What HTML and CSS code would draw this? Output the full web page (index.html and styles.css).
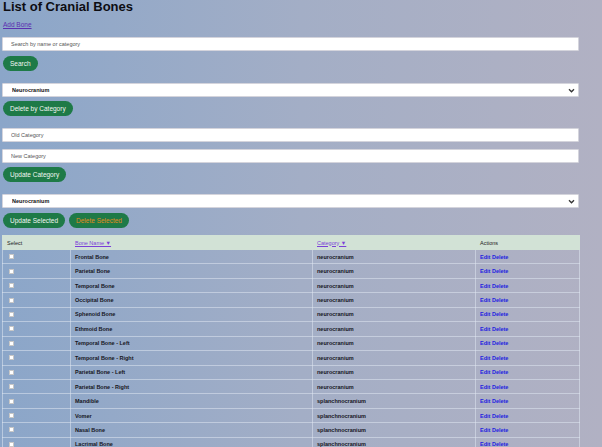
FILE: index.html
```html
<!DOCTYPE html>
<html lang="en">
<head>
<meta charset="utf-8">
<title>List of Cranial Bones</title>
<link rel="stylesheet" href="styles.css">
</head>
<body>
<main class="page">
  <h1 class="title">List of Cranial Bones</h1>
  <p class="add-row"><a href="#" class="add-link">Add Bone</a></p>

  <form class="block block-search">
    <input class="field" type="text" placeholder="Search by name or category">
    <button class="btn" type="button">Search</button>
  </form>

  <form class="block block-delete">
    <div class="select-wrap">
      <select class="field select"><option>Neurocranium</option></select>
      <svg class="chev" viewBox="0 0 8 6" width="7" height="5"><path d="M1 1.5 L4 4.5 L7 1.5" fill="none" stroke="#333" stroke-width="1.6"/></svg>
    </div>
    <button class="btn" type="button">Delete by Category</button>
  </form>

  <form class="block block-update">
    <input class="field" type="text" placeholder="Old Category">
    <input class="field field-second" type="text" placeholder="New Category">
    <button class="btn" type="button">Update Category</button>
  </form>

  <form class="block block-bulk">
    <div class="select-wrap">
      <select class="field select"><option>Neurocranium</option></select>
      <svg class="chev" viewBox="0 0 8 6" width="7" height="5"><path d="M1 1.5 L4 4.5 L7 1.5" fill="none" stroke="#333" stroke-width="1.6"/></svg>
    </div>
    <div class="btn-row">
      <button class="btn" type="button">Update Selected</button>
      <button class="btn btn-warn" type="button">Delete Selected</button>
    </div>
  </form>

  <table class="bones">
    <colgroup>
      <col class="c-sel"><col class="c-name"><col class="c-cat"><col class="c-act">
    </colgroup>
    <thead>
      <tr>
        <th>Select</th>
        <th><a href="#" class="sort">Bone Name ▼</a></th>
        <th><a href="#" class="sort">Category ▼</a></th>
        <th>Actions</th>
      </tr>
    </thead>
    <tbody>
      <tr><td><input type="checkbox" class="chk"></td><td class="name">Frontal Bone</td><td>neurocranium</td><td class="act"><a href="#">Edit</a> <a href="#">Delete</a></td></tr>
      <tr><td><input type="checkbox" class="chk"></td><td class="name">Parietal Bone</td><td>neurocranium</td><td class="act"><a href="#">Edit</a> <a href="#">Delete</a></td></tr>
      <tr><td><input type="checkbox" class="chk"></td><td class="name">Temporal Bone</td><td>neurocranium</td><td class="act"><a href="#">Edit</a> <a href="#">Delete</a></td></tr>
      <tr><td><input type="checkbox" class="chk"></td><td class="name">Occipital Bone</td><td>neurocranium</td><td class="act"><a href="#">Edit</a> <a href="#">Delete</a></td></tr>
      <tr><td><input type="checkbox" class="chk"></td><td class="name">Sphenoid Bone</td><td>neurocranium</td><td class="act"><a href="#">Edit</a> <a href="#">Delete</a></td></tr>
      <tr><td><input type="checkbox" class="chk"></td><td class="name">Ethmoid Bone</td><td>neurocranium</td><td class="act"><a href="#">Edit</a> <a href="#">Delete</a></td></tr>
      <tr><td><input type="checkbox" class="chk"></td><td class="name">Temporal Bone - Left</td><td>neurocranium</td><td class="act"><a href="#">Edit</a> <a href="#">Delete</a></td></tr>
      <tr><td><input type="checkbox" class="chk"></td><td class="name">Temporal Bone - Right</td><td>neurocranium</td><td class="act"><a href="#">Edit</a> <a href="#">Delete</a></td></tr>
      <tr><td><input type="checkbox" class="chk"></td><td class="name">Parietal Bone - Left</td><td>neurocranium</td><td class="act"><a href="#">Edit</a> <a href="#">Delete</a></td></tr>
      <tr><td><input type="checkbox" class="chk"></td><td class="name">Parietal Bone - Right</td><td>neurocranium</td><td class="act"><a href="#">Edit</a> <a href="#">Delete</a></td></tr>
      <tr><td><input type="checkbox" class="chk"></td><td class="name">Mandible</td><td>splanchnocranium</td><td class="act"><a href="#">Edit</a> <a href="#">Delete</a></td></tr>
      <tr><td><input type="checkbox" class="chk"></td><td class="name">Vomer</td><td>splanchnocranium</td><td class="act"><a href="#">Edit</a> <a href="#">Delete</a></td></tr>
      <tr><td><input type="checkbox" class="chk"></td><td class="name">Nasal Bone</td><td>splanchnocranium</td><td class="act"><a href="#">Edit</a> <a href="#">Delete</a></td></tr>
      <tr><td><input type="checkbox" class="chk"></td><td class="name">Lacrimal Bone</td><td>splanchnocranium</td><td class="act"><a href="#">Edit</a> <a href="#">Delete</a></td></tr>
    </tbody>
  </table>
</main>
</body>
</html>
```

FILE: styles.css
```css
* { box-sizing: border-box; }

html, body {
  margin: 0;
  padding: 0;
  height: 100%;
}

body {
  background: linear-gradient(90deg, #8ba6c9 0%, #a3aec6 50%, #b1b1c3 100%);
  font-family: "Liberation Sans", Arial, sans-serif;
  color: #111;
  overflow: hidden;
}

.page {
  width: 579px;
  padding-left: 2px;
  display: flex;
  flex-direction: column;
}

.title {
  margin: 0;
  font-size: 13px;
  line-height: 14px;
  font-weight: bold;
  color: #0d0d12;
  padding-left: 1px;
}

.add-row {
  margin: 7px 0 0 1px;
  font-size: 6.5px;
  line-height: 7px;
}

.add-link { color: #5b2fb0; }

.block {
  display: flex;
  flex-direction: column;
  align-items: flex-start;
  margin: 0;
}

.block-search { margin-top: 9px; }
.block-delete { margin-top: 12px; }
.block-update { margin-top: 12px; }
.block-bulk { margin-top: 12px; }

.field {
  width: 577px;
  height: 14px;
  border: 1px solid #d4d4dc;
  border-radius: 1px;
  background: #fff;
  font-family: "Liberation Sans", Arial, sans-serif;
  font-size: 5.5px;
  padding: 0 0 0 8px;
  color: #222;
  outline: none;
}

.field::placeholder { color: #555; }

.field-second { margin-top: 7px; }

.select-wrap {
  position: relative;
  width: 577px;
}

.select {
  appearance: none;
  -webkit-appearance: none;
  display: block;
  font-weight: bold;
  color: #111;
  padding-left: 9px;
}

.chev {
  position: absolute;
  right: 4px;
  top: 5px;
}

.btn {
  margin-top: 5px;
  height: 15px;
  padding: 0 7px;
  border: none;
  border-radius: 8px;
  background: #1e7a47;
  color: #f2f6f2;
  font-family: "Liberation Sans", Arial, sans-serif;
  font-size: 6.5px;
  line-height: 15px;
  margin-left: 1px;
}

.block-delete .btn,
.block-update .btn { margin-top: 4px; }

.btn-row {
  display: flex;
  gap: 3px;
}

.btn-row .btn { margin-top: 5px; }

.btn-warn { color: #e08a1c; }

.bones {
  margin-top: 7px;
  width: 577px;
  border-collapse: collapse;
  table-layout: fixed;
  font-size: 5.5px;
}

.c-sel { width: 68px; }
.c-name { width: 242px; }
.c-cat { width: 163px; }
.c-act { width: 104px; }

.bones th,
.bones td {
  border: 1px solid rgba(222, 230, 240, 0.55);
  text-align: left;
  padding: 0 0 0 4px;
  height: 14.45px;
  vertical-align: middle;
}

.bones thead tr { background: #d2e2d6; }
.bones th {
  font-weight: normal;
  color: #222;
  height: 14px;
  border-color: #d2e2d6;
}

.sort { color: #7a3fd8; }

.bones td {
  font-weight: bold;
  color: #15151c;
}

.act a {
  color: #1d1de0;
  text-decoration: none;
  font-weight: bold;
}

.chk {
  appearance: none;
  -webkit-appearance: none;
  width: 5px;
  height: 5px;
  margin: 0 0 0 2px;
  background: #fff;
  border: 0.5px solid #c7c7c7;
  display: block;
}
```
